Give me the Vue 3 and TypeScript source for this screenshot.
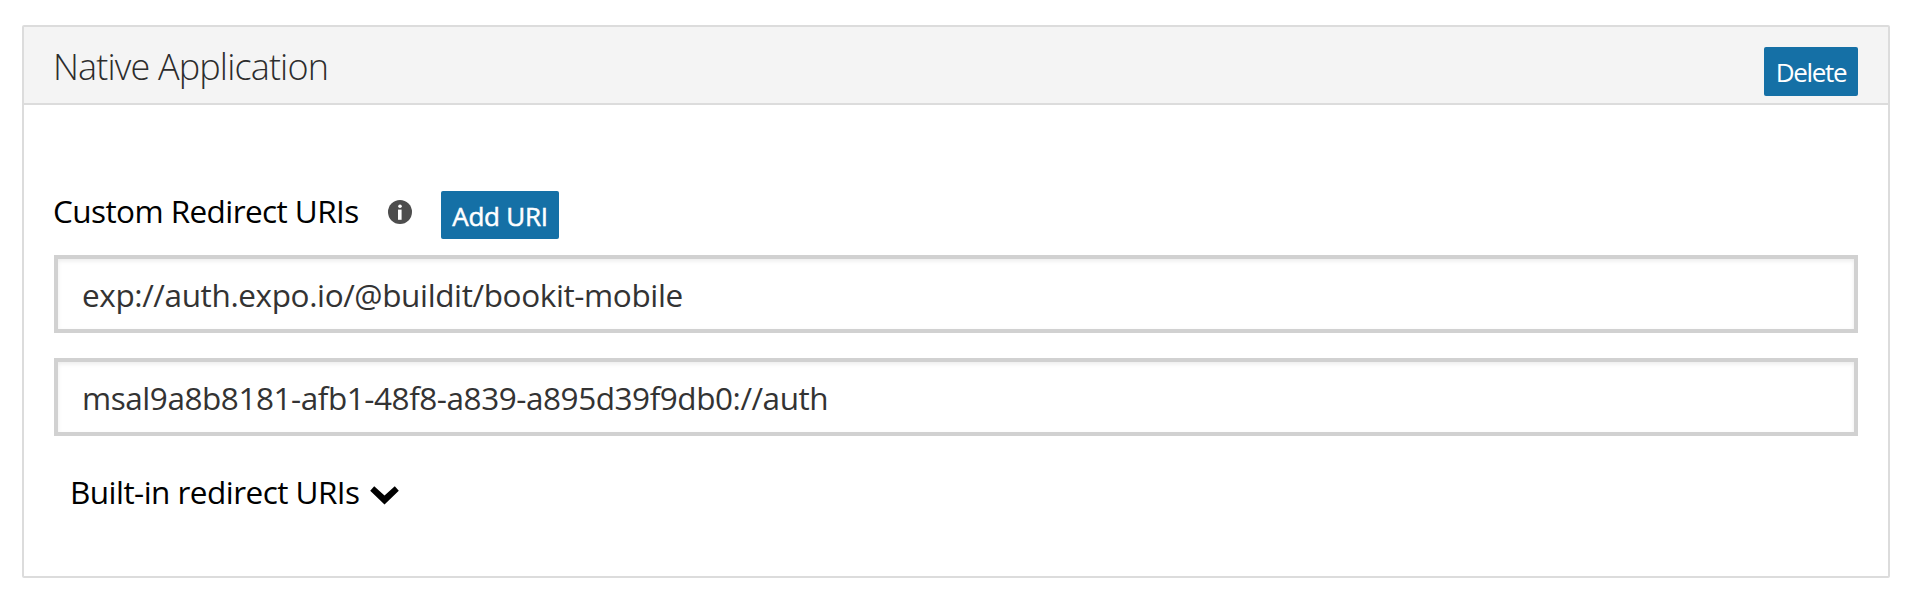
<script setup lang="ts">
import { ref } from 'vue'

interface RedirectUri {
  id: string
  value: string
}

const uris = ref<RedirectUri[]>([
  { id: 'expo', value: 'exp://auth.expo.io/@buildit/bookit-mobile' },
  { id: 'msal', value: 'msal9a8b8181-afb1-48f8-a839-a895d39f9db0://auth' },
])
</script>

<template>
  <section class="panel">
    <header class="panel-header">
      <h2 class="title">Native Application</h2>
      <button type="button" class="button delete">Delete</button>
    </header>
    <div class="panel-body">
      <div class="uri-heading">
        <span class="label">Custom Redirect URIs</span>
        <svg class="info" viewBox="0 0 24 24" aria-hidden="true">
          <circle cx="12" cy="12" r="12" fill="#4d4d4d" />
          <circle cx="12" cy="6.3" r="1.8" fill="#fff" />
          <path d="M10 9.6h3.6v10.2H10z" fill="#fff" />
        </svg>
        <button type="button" class="button add">Add URI</button>
      </div>
      <div class="uri-list">
        <input
          v-for="(uri, i) in uris"
          :key="uri.id"
          v-model="uri.value"
          class="uri-input"
          :class="uri.id"
          type="text"
          spellcheck="false"
          :aria-label="`Redirect URI ${i + 1}`"
        />
      </div>
      <div class="built-in">
        <span class="built-in-label">Built-in redirect URIs</span>
        <svg class="chevron" viewBox="0 0 29 19" aria-hidden="true">
          <path d="M4.2 0.3 L14.5 9.4 L24.8 0.3 L28.8 4.7 L14.5 18.6 L0.2 4.7 Z" fill="#000" />
        </svg>
      </div>
    </div>
  </section>
</template>

<style>
body {
  background: #fff;
}
</style>

<style scoped>
.panel {
  box-sizing: border-box;
  width: 1868px;
  height: 553px;
  margin: 25px 0 0 22px;
  border: 2px solid #dcdcdc;
  border-radius: 2px;
  font-family: 'Open Sans', 'Noto Sans', sans-serif;
  color: #000;
}
.panel-header {
  box-sizing: border-box;
  display: flex;
  justify-content: space-between;
  align-items: flex-start;
  height: 78px;
  padding: 20px 30px 0;
  background: #f4f4f4;
  border-bottom: 2px solid #dcdcdc;
}
.title {
  margin: -2px 0 0 -1px;
  font-size: 36px;
  font-weight: 300;
  line-height: 44px;
  letter-spacing: -0.85px;
  color: #2c2c2c;
  white-space: nowrap;
}
.button {
  box-sizing: border-box;
  flex: none;
  padding: 2px 0 0;
  border: 0;
  border-radius: 2px;
  background: #1570a6;
  color: #fff;
  font-family: inherit;
  font-size: 26px;
  line-height: 44px;
  text-align: center;
  white-space: nowrap;
}
.delete {
  width: 94px;
  height: 49px;
  padding-top: 1px;
  letter-spacing: -1.3px;
}
.add {
  width: 118px;
  height: 48px;
  padding-top: 1px;
  letter-spacing: -0.25px;
  -webkit-text-stroke: 0.5px #fff;
}
.panel-body {
  padding: 86px 30px 0;
}
.uri-heading {
  display: flex;
  align-items: flex-start;
  height: 48px;
}
.label {
  flex: none;
  width: 335px;
  margin-left: -1px;
  font-size: 31.5px;
  line-height: 40px;
  letter-spacing: -0.58px;
  white-space: nowrap;
}
.info {
  flex: none;
  width: 24px;
  height: 24px;
  margin: 9px 29px 0 0;
}
.uri-list {
  display: flex;
  flex-direction: column;
  gap: 25px;
  margin-top: 16px;
}
.uri-input {
  box-sizing: border-box;
  width: 100%;
  height: 78px;
  margin: 0;
  padding: 0 24px;
  border: 4px solid #d1d1d1;
  border-radius: 0;
  outline: 0;
  background: #fff;
  box-shadow: inset 0 2px 4px rgba(0, 0, 0, 0.08);
  color: #333;
  font-family: inherit;
  font-size: 31.5px;
}
.expo {
  letter-spacing: -0.38px;
}
.msal {
  letter-spacing: -0.45px;
}
.built-in {
  display: flex;
  align-items: flex-start;
  margin: 36px 0 0 16px;
}
.built-in-label {
  flex: none;
  width: 300px;
  font-size: 31.5px;
  line-height: 40px;
  letter-spacing: -0.54px;
  white-space: nowrap;
}
.chevron {
  flex: none;
  width: 29px;
  height: 19px;
  margin-top: 14px;
}
</style>
